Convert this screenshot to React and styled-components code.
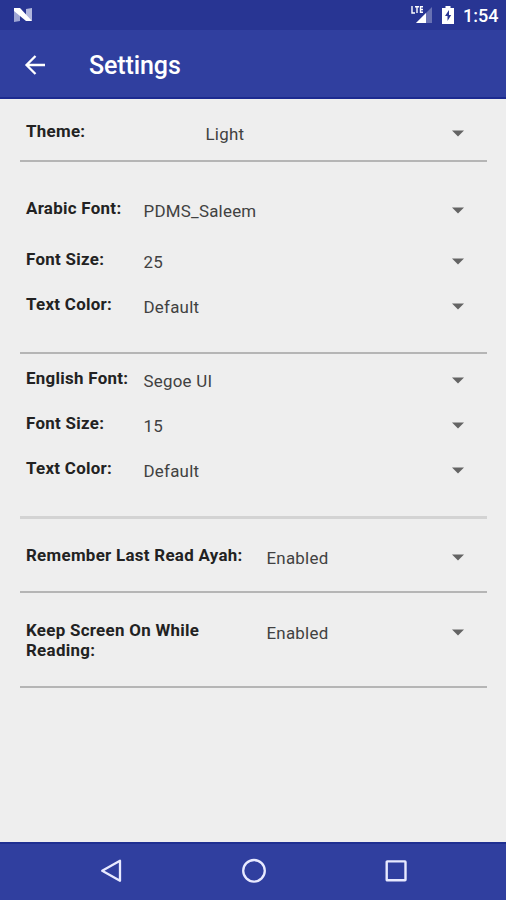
import React from "react";
import styled, { createGlobalStyle } from "styled-components";

const GlobalStyle = createGlobalStyle`
  * { box-sizing: border-box; }
  body { margin: 0; background: #eeeeee; font-family: Roboto, "Noto Sans", sans-serif; }
`;

const Screen = styled.div`
  width: 506px;
  height: 900px;
  display: flex;
  flex-direction: column;
  background: #eeeeee;
  overflow: hidden;
`;

const StatusBar = styled.header`
  height: 30px;
  flex: none;
  display: flex;
  align-items: center;
  justify-content: space-between;
  padding: 0 9px 0 13px;
  background: #283593;
  color: #fff;
`;

const StatusIcons = styled.div`
  display: flex;
  align-items: center;
  gap: 9px;
`;

const Clock = styled.span`
  width: 34px;
  white-space: nowrap;
  font-size: 18px;
  font-weight: 500;
  line-height: 30px;
  padding-top: 2px;
`;

const Toolbar = styled.div`
  height: 69px;
  flex: none;
  display: flex;
  align-items: center;
  padding: 2px 24px 0;
  background: #303f9f;
  border-bottom: 2px solid #1c2a90;
  color: #fff;
`;

const Title = styled.h1`
  margin: 3px 0 0 43px;
  font-size: 25px;
  font-weight: 500;
  line-height: 32px;
  letter-spacing: -0.1px;
`;

const Content = styled.main`
  flex: 1;
  padding: 0 19px 0 20px;
`;

const Section = styled.section`
  height: ${(p) => p.$height}px;
  padding-top: ${(p) => p.$top}px;
  border-bottom: ${(p) => (p.$soft ? "3px solid #d3d3d3" : "2px solid #b5b5b5")};
`;

const Row = styled.div`
  height: ${(p) => p.$height || 45}px;
  display: grid;
  grid-template-columns: ${(p) => p.$label}px 1fr 12px;
  padding: 0 23px 0 6px;
  align-items: start;
`;

const Label = styled.span`
  font-size: 16.9px;
  font-weight: 700;
  line-height: 20px;
  letter-spacing: 0.3px;
  white-space: nowrap;
  color: #222;
`;

const Value = styled.span`
  padding: 3px 0 0 0.5px;
  font-size: 16.9px;
  line-height: 20px;
  letter-spacing: 0.25px;
  color: #414141;
`;

const Caret = styled.svg`
  display: block;
  width: 12px;
  height: 7px;
  margin-top: 9px;
`;

const NavBar = styled.nav`
  height: 58px;
  flex: none;
  display: flex;
  align-items: center;
  justify-content: space-between;
  padding: 0 98px 2px 99px;
  background: #303f9f;
  border-top: 2px solid #1f2f91;
`;

function Setting({ label, value, labelWidth = 117, height }) {
  return (
    <Row $label={labelWidth} $height={height}>
      <Label>{label}</Label>
      <Value>{value}</Value>
      <Caret viewBox="0 0 12 7"><path d="M0 .5h12L6 6.5z" fill="#646464" /></Caret>
    </Row>
  );
}

export default function App() {
  return (
    <>
      <GlobalStyle />
      <Screen>
        <StatusBar>
          <svg width="20" height="16" viewBox="0 0 20 16">
            <path d="M1 2l6 3v9l-6 1z" fill="#9fa6d4" />
            <path d="M13 2l6-1v13l-6-3z" fill="#b0b6dd" />
            <path d="M1 1h6l12 13h-6L1 4z" fill="#fff" />
          </svg>
          <StatusIcons>
            <svg width="22" height="20" viewBox="0 0 22 20">
              <path d="M21 2v16H5z" fill="#6871b3" />
              <path d="M15 8v10H5z" fill="#fff" />
              <path d="M0 0h13v9H0z" fill="#283593" />
              <path d="M1 1v7h3M4 1.7h4M6 1.7V8M12 1.7H9.5v5.6H12M9.5 4.5H12" fill="none" stroke="#fff" strokeWidth="1.4" />
            </svg>
            <svg width="12" height="18" viewBox="0 0 12 18">
              <path d="M3.5 0h5v2H12v16H0V2h3.5z" fill="#fff" />
              <path d="M7 4L3 10h2.5v5l3.7-6H7z" fill="#283593" />
            </svg>
            <Clock>1:54</Clock>
          </StatusIcons>
        </StatusBar>
        <Toolbar>
          <svg width="22" height="22" viewBox="0 0 22 22">
            <path d="M21 11H3M11.5 2L2.5 11l9 9" fill="none" stroke="#fff" strokeWidth="2.3" />
          </svg>
          <Title>Settings</Title>
        </Toolbar>
        <Content>
          <Section $height={63} $top={22}>
            <Setting label="Theme:" value="Light" labelWidth={179} height={38} />
          </Section>
          <Section $height={192} $top={36}>
            <Setting label="Arabic Font:" value="PDMS_Saleem" height={51} />
            <Setting label="Font Size:" value="25" />
            <Setting label="Text Color:" value="Default" />
          </Section>
          <Section $height={165} $top={14} $soft>
            <Setting label="English Font:" value="Segoe UI" />
            <Setting label="Font Size:" value="15" />
            <Setting label="Text Color:" value="Default" />
          </Section>
          <Section $height={74} $top={26}>
            <Setting label="Remember Last Read Ayah:" value="Enabled" labelWidth={240} />
          </Section>
          <Section $height={95} $top={27}>
            <Setting label={<>Keep Screen On While<br />Reading:</>} value="Enabled" labelWidth={240} />
          </Section>
        </Content>
        <NavBar>
          <svg width="24" height="26" viewBox="0 0 24 26">
            <path d="M21 2.8v20L3.2 12.8z" fill="none" stroke="#e8eaff" strokeWidth="2.3" strokeLinejoin="round" />
          </svg>
          <svg width="26" height="26" viewBox="0 0 26 26">
            <circle cx="13" cy="12.8" r="10.8" fill="none" stroke="#e8eaff" strokeWidth="2.3" />
          </svg>
          <svg width="24" height="26" viewBox="0 0 24 26">
            <rect x="2.7" y="3.4" width="18.8" height="18.8" rx=".5" fill="none" stroke="#e8eaff" strokeWidth="2.4" />
          </svg>
        </NavBar>
      </Screen>
    </>
  );
}
